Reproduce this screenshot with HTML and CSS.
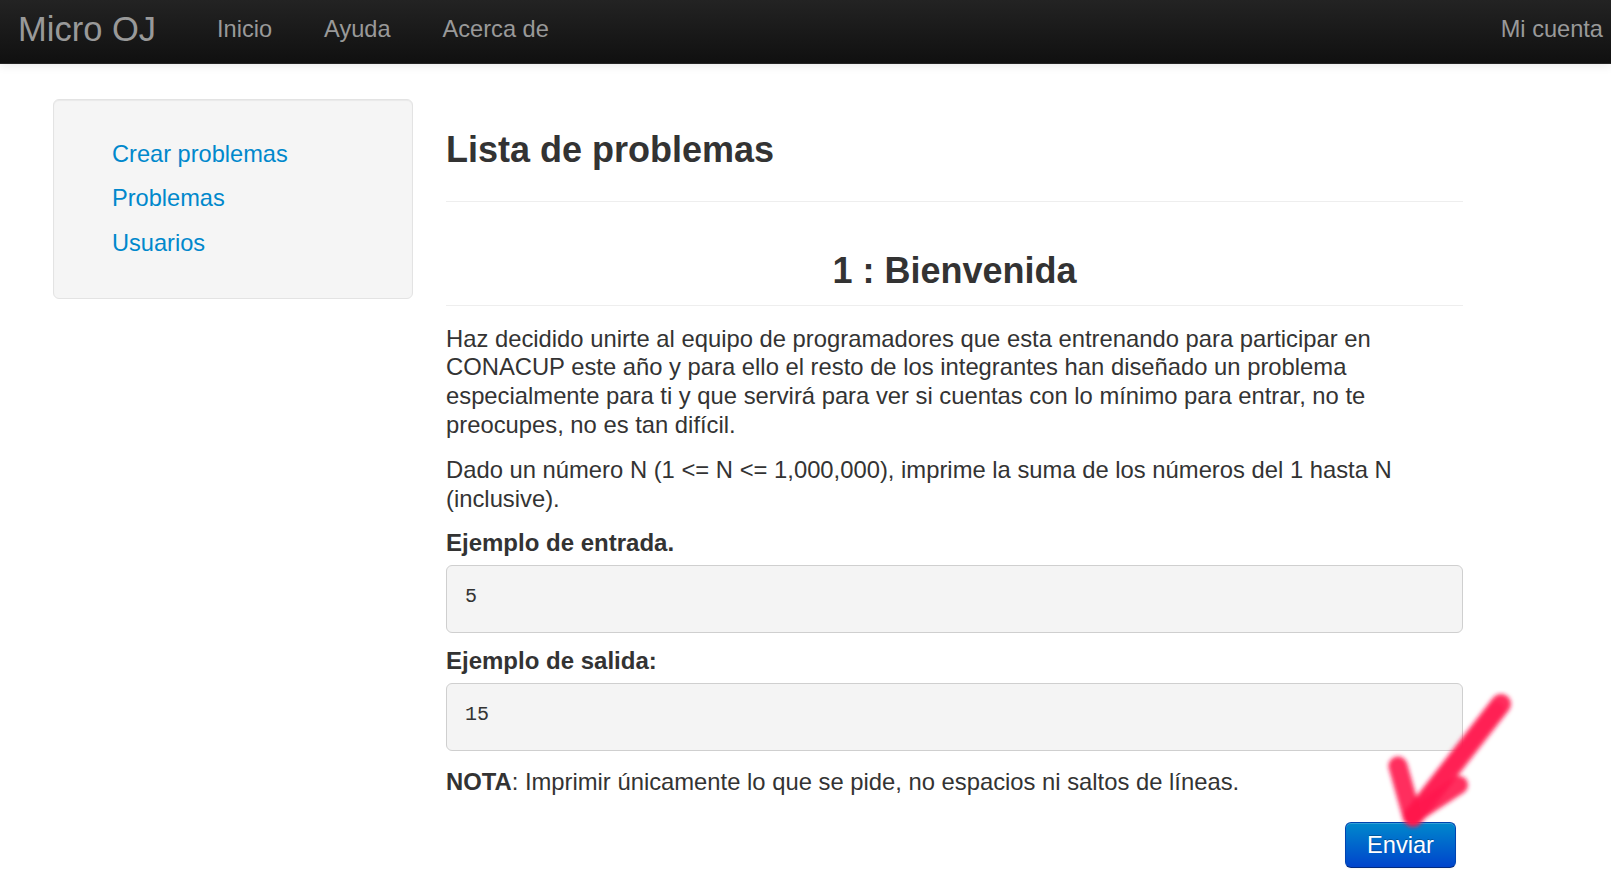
FILE: index.html
```html
<!DOCTYPE html>
<html lang="es">
<head>
<meta charset="utf-8">
<title>Micro OJ</title>
<link rel="stylesheet" href="styles.css">
</head>
<body>
<header class="navbar">
  <a class="brand" href="#">Micro OJ</a>
  <nav class="nav">
    <a href="#">Inicio</a>
    <a href="#">Ayuda</a>
    <a href="#">Acerca de</a>
  </nav>
  <a class="account" href="#">Mi cuenta</a>
</header>

<div class="container">
  <aside class="well">
    <ul class="nav-list">
      <li><a href="#">Crear problemas</a></li>
      <li><a href="#">Problemas</a></li>
      <li><a href="#">Usuarios</a></li>
    </ul>
  </aside>

  <main class="content">
    <h1 class="page-title">Lista de problemas</h1>
    <h2 class="problem-title">1 : Bienvenida</h2>
    <p class="text first">Haz decidido unirte al equipo de programadores que esta entrenando para participar en CONACUP este año y para ello el resto de los integrantes han diseñado un problema especialmente para ti y que servirá para ver si cuentas con lo mínimo para entrar, no te preocupes, no es tan difícil.</p>
    <p class="text">Dado un número N (1 &lt;= N &lt;= 1,000,000), imprime la suma de los números del 1 hasta N (inclusive).</p>
    <h4 class="label">Ejemplo de entrada.</h4>
    <pre class="sample">5</pre>
    <h4 class="label second">Ejemplo de salida:</h4>
    <pre class="sample">15</pre>
    <p class="text note"><strong>NOTA</strong>: Imprimir únicamente lo que se pide, no espacios ni saltos de líneas.</p>
    <div class="actions">
      <button class="btn-primary" type="button">Enviar</button>
    </div>
  </main>
</div>

<svg class="arrow" width="160" height="160" viewBox="1370 690 160 160" aria-hidden="true">
  <defs>
    <filter id="soft" x="-20%" y="-20%" width="140%" height="140%">
      <feGaussianBlur stdDeviation="2"/>
    </filter>
  </defs>
  <g filter="url(#soft)" stroke="#ff1a4d" stroke-linecap="round" fill="none">
    <path d="M1501 704 L1413 817" stroke-width="20" opacity="0.9"/>
    <path d="M1497 709 L1418 808" stroke-width="15" opacity="0.55"/>
    <path d="M1398 766 L1412 816" stroke-width="19" opacity="0.9"/>
    <path d="M1459 785 L1413 815" stroke-width="18" opacity="0.9"/>
  </g>
</svg>
</body>
</html>
```

FILE: styles.css
```css
* {
  box-sizing: border-box;
}

html, body {
  margin: 0;
  padding: 0;
}

body {
  position: relative;
  font-family: "Liberation Sans", Arial, Helvetica, sans-serif;
  color: #333;
  background: #fff;
  width: 1611px;
  height: 881px;
  overflow: hidden;
}

a {
  text-decoration: none;
}

/* ---------- navbar ---------- */
.navbar {
  display: flex;
  align-items: center;
  height: 64px;
  padding: 0 8px 5px 18px;
  background: linear-gradient(to bottom, #232323, #101010);
  border-bottom: 1px solid #252525;
  box-shadow: 0 1px 10px rgba(0, 0, 0, 0.1);
}

.brand {
  font-size: 34.5px;
  line-height: 40px;
  color: #999;
  margin-right: 61px;
}

.nav {
  display: flex;
  gap: 52px;
}

.nav a,
.account {
  font-size: 23.6px;
  line-height: 30px;
  color: #999;
}

.account {
  margin-left: auto;
}

/* ---------- layout ---------- */
.container {
  display: grid;
  grid-template-columns: 360px 1017px;
  column-gap: 33px;
  align-items: start;
  padding: 35px 0 0 53px;
}

/* ---------- sidebar ---------- */
.well {
  height: 200px;
  padding: 31.5px 0 0 58px;
  background: #f5f5f5;
  border: 1px solid #e3e3e3;
  border-radius: 6px;
  box-shadow: inset 0 1px 1px rgba(0, 0, 0, 0.05);
}

.nav-list {
  list-style: none;
  margin: 0;
  padding: 0;
}

.nav-list a {
  display: block;
  font-size: 23.6px;
  line-height: 44.5px;
  color: #0088cc;
}

/* ---------- content ---------- */
.content {
  display: block;
}

.page-title {
  margin: 31px 0 0;
  padding-bottom: 31px;
  font-size: 36px;
  line-height: 40px;
  font-weight: bold;
  border-bottom: 1px solid #eee;
}

.problem-title {
  margin: 49px 0 0;
  padding-bottom: 14px;
  font-size: 36px;
  line-height: 40px;
  font-weight: bold;
  text-align: center;
  border-bottom: 1px solid #eee;
}

.text {
  margin: 0 0 17px;
  font-size: 23.8px;
  line-height: 28.7px;
}

.text.first {
  margin-top: 18.5px;
}

.label {
  margin: 0;
  font-size: 24px;
  line-height: 26px;
  font-weight: bold;
  margin-top: -1px;
}

.label.second {
  margin-top: 15.5px;
}

.sample {
  margin: 9px 0 0;
  height: 68px;
  padding: 19px 18px 0;
  font-family: "Liberation Mono", "Courier New", monospace;
  font-size: 20px;
  line-height: 24px;
  color: #333;
  background: #f4f4f4;
  border: 1px solid #cfcfcf;
  border-radius: 6px;
}

.text.note {
  margin-top: 16.5px;
  margin-bottom: 0;
}

.actions {
  display: flex;
  justify-content: flex-end;
  padding-right: 7px;
  margin-top: 26px;
}

.btn-primary {
  width: 111px;
  height: 46px;
  padding: 0;
  font-family: "Liberation Sans", Arial, sans-serif;
  font-size: 23.6px;
  color: #fff;
  text-shadow: 0 -1px 0 rgba(0, 0, 0, 0.25);
  background: linear-gradient(to bottom, #0088cc, #0044cc);
  border: 1px solid #0044b0;
  border-bottom-color: #002a80;
  border-radius: 6px;
  box-shadow: inset 0 1px 0 rgba(255, 255, 255, 0.2), 0 1px 2px rgba(0, 0, 0, 0.05);
}

/* ---------- annotation arrow ---------- */
.arrow {
  position: absolute;
  left: 1370px;
  top: 690px;
}
```
